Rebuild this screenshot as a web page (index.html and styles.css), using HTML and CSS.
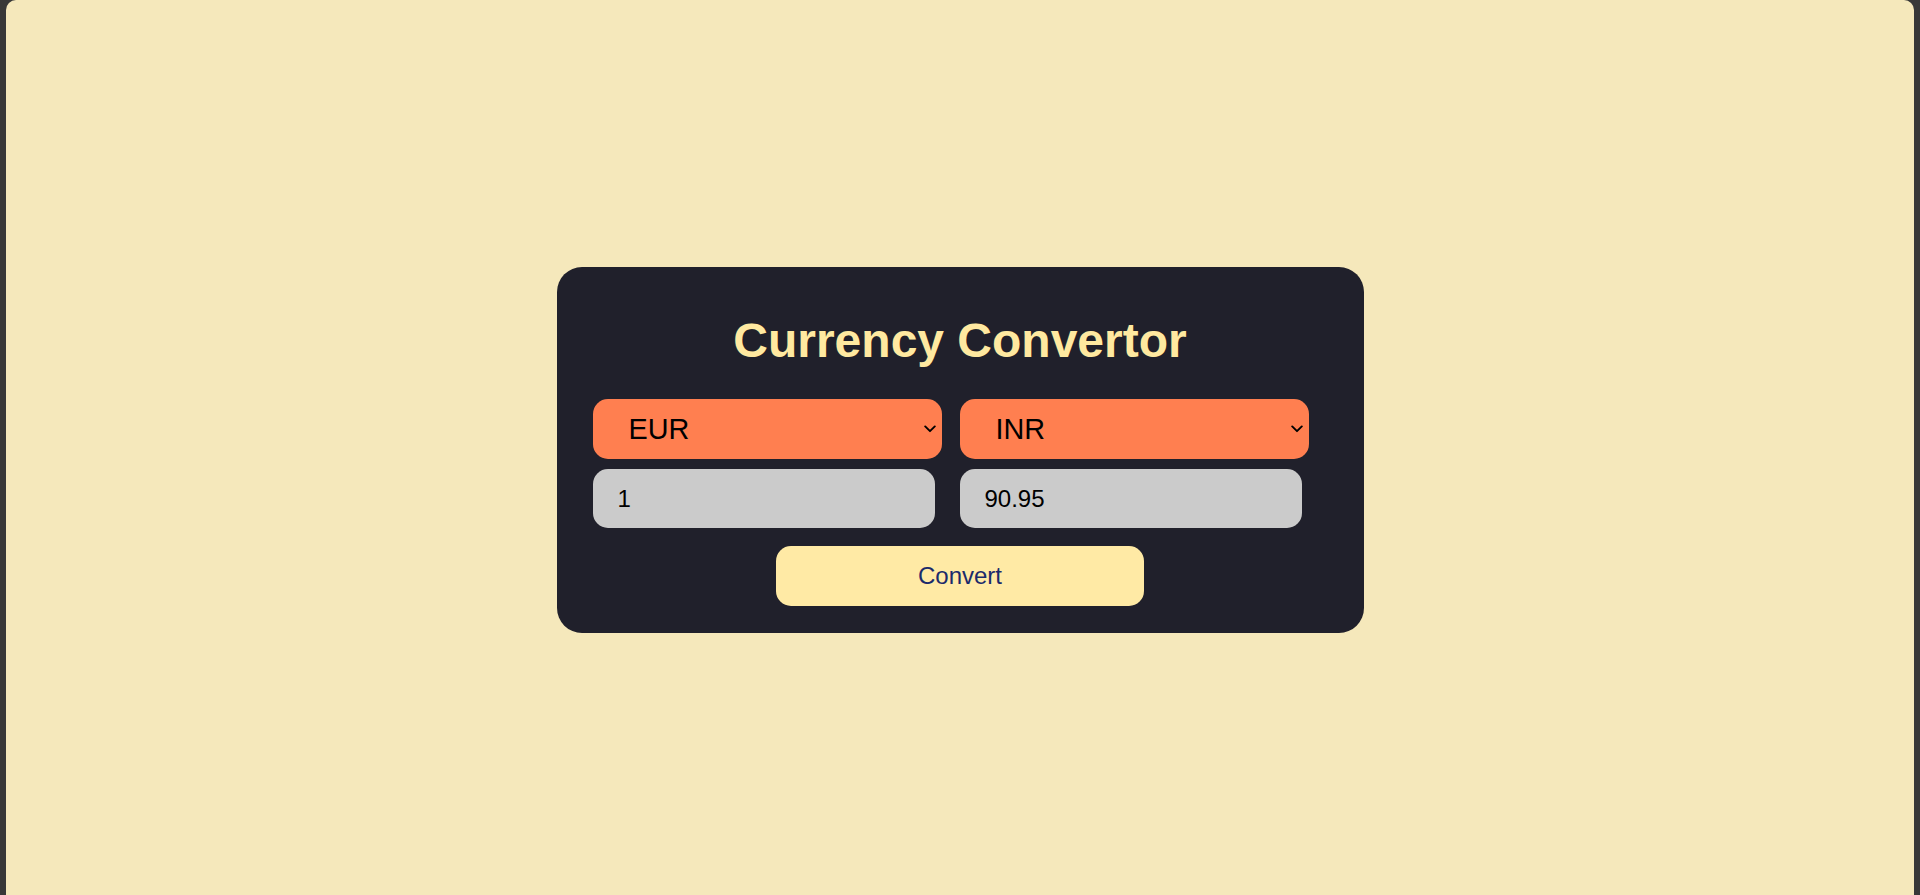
FILE: index.html
```html
<!DOCTYPE html>
<html lang="en">
<head>
<meta charset="utf-8">
<title>Currency Convertor</title>
<link rel="stylesheet" href="styles.css">
</head>
<body>
<div class="frame">
  <div class="card">
    <h1 class="title">Currency Convertor</h1>
    <div class="grid">
      <div class="pick-wrap">
        <select class="pick">
          <option selected>EUR</option>
          <option>USD</option>
          <option>INR</option>
        </select>
        <svg class="chev" width="12" height="8" viewBox="0 0 12 8" aria-hidden="true"><path d="M1.2 1.4 L6 6.2 L10.8 1.4" fill="none" stroke="#000" stroke-width="1.9" stroke-linecap="round" stroke-linejoin="round"/></svg>
      </div>
      <div class="pick-wrap">
        <select class="pick">
          <option>EUR</option>
          <option>USD</option>
          <option selected>INR</option>
        </select>
        <svg class="chev" width="12" height="8" viewBox="0 0 12 8" aria-hidden="true"><path d="M1.2 1.4 L6 6.2 L10.8 1.4" fill="none" stroke="#000" stroke-width="1.9" stroke-linecap="round" stroke-linejoin="round"/></svg>
      </div>
      <input class="amount" type="text" value="1">
      <input class="amount" type="text" value="90.95">
    </div>
    <button class="convert" type="button">Convert</button>
  </div>
</div>
</body>
</html>
```

FILE: styles.css
```css
html, body {
  margin: 0;
  padding: 0;
  height: 100%;
}
body {
  background: #383838;
  font-family: "Liberation Sans", Arial, sans-serif;
}
.frame {
  box-sizing: border-box;
  height: 895px;
  margin: 0 6px;
  background: #f5e8bb;
  border-radius: 10px 10px 0 0;
  display: flex;
  align-items: center;
  justify-content: center;
  padding-top: 5px;
}
.card {
  box-sizing: border-box;
  width: 807px;
  background: #20202b;
  border-radius: 25px;
  padding: 46px 36px 27px;
  display: flex;
  flex-direction: column;
  align-items: center;
}
.title {
  margin: 0 0 31px;
  font-size: 48px;
  font-weight: 700;
  line-height: normal;
  color: #ffe9a0;
  text-align: center;
}
.grid {
  align-self: flex-start;
  display: grid;
  grid-template-columns: 349px 349px;
  column-gap: 18px;
  row-gap: 10px;
}
.pick-wrap {
  position: relative;
  width: 349px;
  height: 60px;
}
.pick {
  box-sizing: border-box;
  -webkit-appearance: none;
  appearance: none;
  width: 349px;
  height: 60px;
  border: none;
  border-radius: 15px;
  background-color: #ff7f50;
  color: #000;
  font-family: "Liberation Sans", Arial, sans-serif;
  font-size: 28.8px;
  padding: 0 24px 0 36px;
  outline: none;
}
.chev {
  position: absolute;
  right: 6px;
  top: 26px;
  pointer-events: none;
}
.amount {
  box-sizing: border-box;
  width: 342px;
  height: 59px;
  border: none;
  border-radius: 15px;
  background: #cbcbcb;
  color: #000;
  font-family: "Liberation Sans", Arial, sans-serif;
  font-size: 24px;
  padding: 0 10px 0 25px;
  outline: none;
}
.convert {
  margin-top: 18px;
  width: 368px;
  height: 60px;
  border: none;
  border-radius: 15px;
  background: #ffeaa5;
  color: #1b2a6b;
  font-family: "Liberation Sans", Arial, sans-serif;
  font-size: 24px;
  cursor: pointer;
}
```
